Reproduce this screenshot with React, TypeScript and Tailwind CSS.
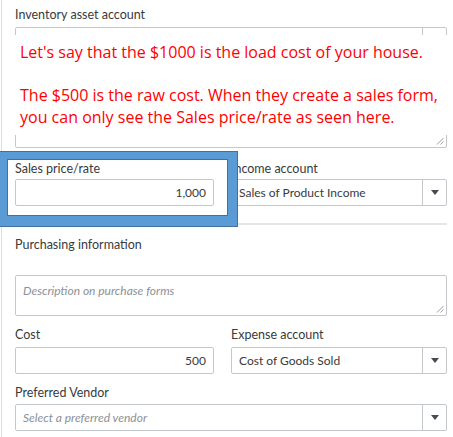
import React from 'react';

const Caret = () => (
    <svg width="8" height="5" viewBox="0 0 8 5" className="block">
        <path d="M0 0 L8 0 L4 5 Z" fill="#4a4b4f" />
    </svg>
);

const Grip = () => (
    <svg width="8" height="8" viewBox="0 0 8 8" className="absolute right-[2px] bottom-[2px]">
        <path d="M7.5 1 L1 7.5 M7.5 4.5 L4.5 7.5" stroke="#9a9ca1" strokeWidth="1" />
    </svg>
);

const Label = ({ children, className = '' }: { children: React.ReactNode; className?: string }) => (
    <div className={`text-[12.5px] leading-[16px] text-[#393a3d] ${className}`}>{children}</div>
);

const SelectBox = ({ value, placeholder, className = '' }: { value?: string; placeholder?: string; className?: string }) => (
    <div className={`flex h-[27px] border border-[#c4c7cc] rounded-[2px] bg-white ${className}`}>
        <div className="flex-1 flex items-center px-[7px] text-[12px] truncate">
            {value ? (
                <span className="text-[#393a3d]">{value}</span>
            ) : (
                <span className="text-[#8d9096] italic">{placeholder}</span>
            )}
        </div>
        <div className="w-[24px] border-l border-[#c4c7cc] flex items-center justify-center">
            <Caret />
        </div>
    </div>
);

const NumberBox = ({ value }: { value: string }) => (
    <div className="h-[27px] border border-[#c4c7cc] rounded-[2px] bg-white flex items-center justify-end pr-[7px] text-[12px] text-[#393a3d]">
        {value}
    </div>
);

export default function App() {
    return (
        <div
            className="relative w-[453px] h-[437px] bg-white overflow-hidden"
            style={{ fontFamily: 'Lato, "Open Sans", sans-serif' }}
        >
            <div className="ml-[1px] h-full border-l border-[#dadde1] pl-[13px] pr-[6px] pt-[7px]">
                <Label>Inventory asset account</Label>

                {/* select + sales description, covered by the note */}
                <div className="relative mt-[4px] h-[121px]">
                    <SelectBox value="" placeholder="" />
                    <div className="relative mt-[33px] h-[61px] border border-[#c4c7cc] rounded-[2px]">
                        <Grip />
                    </div>
                    <div
                        className="absolute left-[-2px] right-[-2px] top-[8px] bottom-[13px] bg-white pl-[7px] pt-[7px] text-[16px] leading-[21.5px] text-[#ff0000] whitespace-nowrap"
                        style={{ fontFamily: '"Open Sans", sans-serif' }}
                    >
                        <div>Let's say that the $1000 is the load cost of your house.</div>
                        <div>&nbsp;</div>
                        <div>The $500 is the raw cost. When they create a sales form,</div>
                        <div>you can only see the Sales price/rate as seen here.</div>
                    </div>
                </div>

                <div className="grid grid-cols-[199px_216px] gap-x-[17px] mt-[13px]">
                    <Label className="mb-[2px]">Sales price/rate</Label>
                    <Label className="mb-[2px]">Income account</Label>
                    <NumberBox value="1,000" />
                    <SelectBox value="Sales of Product Income" />
                </div>

                <div className="mt-[17px] h-[2px] bg-[#e4e6e9]" />

                <Label className="mt-[12px]">Purchasing information</Label>
                <div className="relative mt-[22px] h-[41px] border border-[#c4c7cc] rounded-[2px] px-[7px] pt-[6px] text-[12px] italic text-[#8d9096]">
                    Description on purchase forms
                    <Grip />
                </div>

                <div className="grid grid-cols-[199px_216px] gap-x-[17px] mt-[11px]">
                    <Label className="mb-[4px]">Cost</Label>
                    <Label className="mb-[4px]">Expense account</Label>
                    <NumberBox value="500" />
                    <SelectBox value="Cost of Goods Sold" />
                </div>

                <Label className="mt-[11px]">Preferred Vendor</Label>
                <SelectBox placeholder="Select a preferred vendor" className="mt-[3px]" />
            </div>

            {/* highlight around Sales price/rate */}
            <div className="pointer-events-none absolute left-0 top-[152px] w-[237px] h-[74px] border-[#5b9bd5] border-t-[7px] border-l-[7px] border-r-[9px] border-b-[10px] outline outline-1 outline-[#41719c] shadow-[inset_0_0_0_1px_#41719c]" />
        </div>
    );
}
